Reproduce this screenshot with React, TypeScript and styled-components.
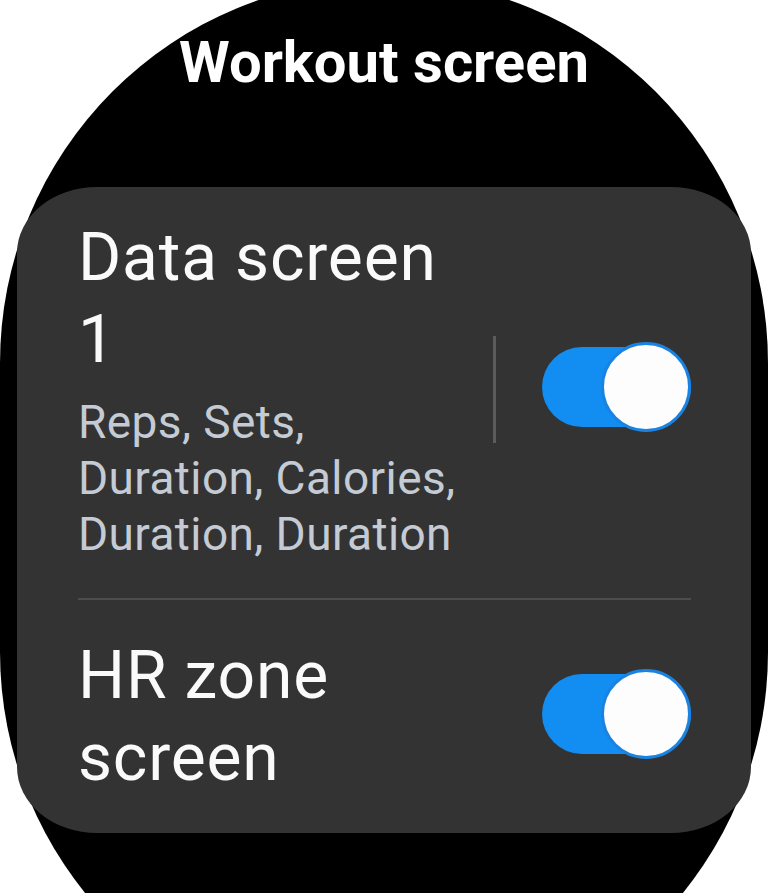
import React from "react";
import styled, { createGlobalStyle } from "styled-components";

const GlobalStyle = createGlobalStyle`
  html, body {
    margin: 0;
    padding: 0;
    background: #ffffff;
    overflow: hidden;
  }
  body {
    font-family: Roboto, "Noto Sans", "Liberation Sans", sans-serif;
  }
`;

const Page = styled.div`
  width: 768px;
  height: 893px;
  overflow: hidden;
  background: #ffffff;
`;

// watch face: straight sides with round ends
const WatchFace = styled.div`
  box-sizing: border-box;
  width: 768px;
  height: 1057px;
  margin-top: -21px;
  border-radius: 384px;
  background: #000000;
  display: flex;
  flex-direction: column;
  align-items: center;
  padding-top: 48px;
`;

const ScreenTitle = styled.h1`
  margin: 0;
  font-size: 58px;
  line-height: 70px;
  font-weight: 700;
  color: #ffffff;
`;

const Card = styled.div`
  box-sizing: border-box;
  width: 734px;
  margin-top: 90px;
  padding: 30px 60px 34px 61px;
  background: #333333;
  border-radius: 80px / 66px;
`;

const Row = styled.div`
  display: flex;
  align-items: center;
`;

const TextCol = styled.div`
  width: 390px;
  flex-shrink: 0;
`;

const ItemTitle = styled.div`
  font-size: 66px;
  line-height: 82px;
  letter-spacing: 0.8px;
  color: #fafafa;
`;

const ItemSub = styled.div`
  margin-top: 13px;
  font-size: 46px;
  line-height: 56px;
  letter-spacing: 0.4px;
  color: #c4cbd4;
`;

const VDivider = styled.div`
  width: 3px;
  height: 107px;
  margin-left: 25px;
  background: #5c5c5c;
`;

const HDivider = styled.div`
  height: 2px;
  margin: 36px 0 35px;
  background: #4d4d4d;
`;

const Track = styled.div<{ $on: boolean }>`
  margin-left: auto;
  margin-top: -6px;
  width: 149px;
  height: 80px;
  border-radius: 40px;
  background: ${(p) => (p.$on ? "#128df1" : "#5e5e5e")};
  display: flex;
  align-items: center;
  justify-content: ${(p) => (p.$on ? "flex-end" : "flex-start")};
`;

const Knob = styled.div`
  box-sizing: border-box;
  flex-shrink: 0;
  width: 90px;
  height: 90px;
  border-radius: 50%;
  border: 3px solid #1a83e2;
  background: #fdfdfd;
`;

const Toggle = ({ on }: { on: boolean }) => (
  <Track $on={on}>
    <Knob />
  </Track>
);

const App = () => {
  return (
    <Page>
      <GlobalStyle />
      <WatchFace>
        <ScreenTitle>Workout screen</ScreenTitle>
        <Card>
          <Row>
            <TextCol>
              <ItemTitle>Data screen 1</ItemTitle>
              <ItemSub>Reps, Sets, Duration, Calories, Duration, Duration</ItemSub>
            </TextCol>
            <VDivider />
            <Toggle on />
          </Row>
          <HDivider />
          <Row>
            <TextCol>
              <ItemTitle>HR zone screen</ItemTitle>
            </TextCol>
            <Toggle on />
          </Row>
        </Card>
      </WatchFace>
    </Page>
  );
};

export default App;
